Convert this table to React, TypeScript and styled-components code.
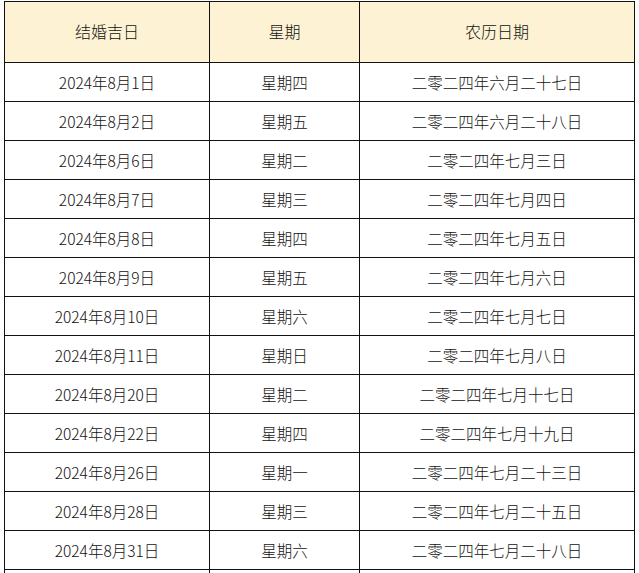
import styled, { createGlobalStyle } from 'styled-components';

const GlobalStyle = createGlobalStyle`
  html, body {
    margin: 0;
    padding: 0;
    background: #ffffff;
  }
  body {
    font-family: "Noto Sans CJK SC", "Noto Sans", sans-serif;
    color: #111111;
  }
`;

const rows = [
  ['2024年8月1日', '星期四', '二零二四年六月二十七日'],
  ['2024年8月2日', '星期五', '二零二四年六月二十八日'],
  ['2024年8月6日', '星期二', '二零二四年七月三日'],
  ['2024年8月7日', '星期三', '二零二四年七月四日'],
  ['2024年8月8日', '星期四', '二零二四年七月五日'],
  ['2024年8月9日', '星期五', '二零二四年七月六日'],
  ['2024年8月10日', '星期六', '二零二四年七月七日'],
  ['2024年8月11日', '星期日', '二零二四年七月八日'],
  ['2024年8月20日', '星期二', '二零二四年七月十七日'],
  ['2024年8月22日', '星期四', '二零二四年七月十九日'],
  ['2024年8月26日', '星期一', '二零二四年七月二十三日'],
  ['2024年8月28日', '星期三', '二零二四年七月二十五日'],
  ['2024年8月31日', '星期六', '二零二四年七月二十八日'],
];

const App = () => {
  return (
    <Page>
      <GlobalStyle />
      <Table>
        <colgroup>
          <col style={{ width: 205 }} />
          <col style={{ width: 150 }} />
          <col style={{ width: 275 }} />
        </colgroup>
        <thead>
          <tr>
            <HeadCell>结婚吉日</HeadCell>
            <HeadCell>星期</HeadCell>
            <HeadCell>农历日期</HeadCell>
          </tr>
        </thead>
        <tbody>
          {rows.map((r) => (
            <tr key={r[0]}>
              <Cell>{r[0]}</Cell>
              <Cell>{r[1]}</Cell>
              <Cell>{r[2]}</Cell>
            </tr>
          ))}
          <tr>
            <Cell />
            <Cell />
            <Cell />
          </tr>
        </tbody>
      </Table>
    </Page>
  );
};

const Page = styled.div`
  padding: 1px 0 0 4px;
  height: 573px;
  overflow: hidden;
`;

const Table = styled.table`
  border-collapse: collapse;
  table-layout: fixed;
  width: 631px;
`;

const HeadCell = styled.th`
  height: 58px;
  padding: 0 0 2px;
  border: 1.3px solid #111;
  background: #fdf2d4;
  font-weight: 300;
  font-size: 16px;
  text-align: center;
  vertical-align: middle;
`;

const Cell = styled.td`
  height: 38px;
  padding: 0;
  border: 1.3px solid #111;
  font-weight: 300;
  font-size: 15.5px;
  text-align: center;
  vertical-align: middle;
`;

export default App;
